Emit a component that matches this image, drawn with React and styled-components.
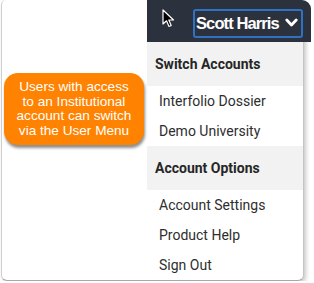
import React from "react";
import styled, { createGlobalStyle } from "styled-components";

const Global = createGlobalStyle`
  html, body {
    margin: 0;
    padding: 0;
    background: #ffffff;
  }
`;

const Frame = styled.div`
  box-sizing: border-box;
  margin-left: 1px;
  width: 303px;
  height: 281px;
  display: flex;
  background: #fff;
  border-left: 1px solid #cfcfcf;
  border-right: 1px solid #c4c4c4;
  border-bottom: 1px solid #a8a8a8;
  border-radius: 5px 8px 6px 6px;
  box-shadow: 2px 2px 4px rgba(0, 0, 0, 0.22);
`;

const Side = styled.div`
  box-sizing: border-box;
  width: 145px;
  flex: none;
  padding: 73px 0 0 2px;
`;

const Callout = styled.div`
  box-sizing: border-box;
  width: 140px;
  height: 72px;
  border-radius: 14px;
  background: #ff8200;
  box-shadow: 1px 3px 3px rgba(0, 0, 0, 0.45);
  display: flex;
  align-items: center;
  justify-content: center;
  text-align: center;
  color: #fff;
  font-family: "Liberation Sans", Arial, sans-serif;
  font-size: 13.6px;
  line-height: 14.5px;
`;

const Panel = styled.div`
  width: 156px;
  flex: none;
  display: flex;
  flex-direction: column;
`;

const Header = styled.div`
  box-sizing: border-box;
  width: 164px;
  height: 42px;
  background: #2c323d;
  border-top-right-radius: 9px;
  display: flex;
  align-items: center;
  padding-left: 15px;
`;

const Cursor = styled.svg`
  align-self: flex-start;
  margin-top: 9px;
  flex: none;
`;

const UserButton = styled.div`
  box-sizing: border-box;
  margin-left: 18px;
  width: 110px;
  height: 29px;
  margin-top: 4px;
  border: 2px solid #2f72c4;
  border-radius: 3px;
  display: flex;
  align-items: center;
  justify-content: space-between;
  padding: 0 3px 0 1px;
  color: #fff;
  font-family: "Liberation Sans", Arial, sans-serif;
  font-weight: 700;
  font-size: 16.5px;
  letter-spacing: -0.9px;
`;

const Menu = styled.div`
  display: flex;
  flex-direction: column;
  font-family: Roboto, "Liberation Sans", sans-serif;
  color: #2b2b2b;
`;

const SectionTitle = styled.div`
  height: 44px;
  display: flex;
  align-items: center;
  padding-left: 8px;
  background: #f2f2f2;
  font-size: 14px;
  font-weight: 700;
  color: #262626;
`;

const Item = styled.div`
  height: 30px;
  display: flex;
  align-items: center;
  padding-left: 12px;
  font-size: 14px;
  color: #2e2e2e;
`;

const Pointer = () => (
  <Cursor width="13" height="19" viewBox="0 0 13 19">
    <path
      d="M1 1 L1 15 L4.5 11.8 L7 17.5 L9.2 16.5 L6.8 11 L11.5 11 Z"
      fill="#000"
      stroke="#fff"
      strokeWidth="1.2"
      strokeLinejoin="round"
    />
  </Cursor>
);

const Chevron = () => (
  <svg width="13" height="10" viewBox="0 0 13 10">
    <path
      d="M1.8 2 L6.5 7 L11.2 2"
      fill="none"
      stroke="#fff"
      strokeWidth="2.8"
      strokeLinecap="round"
      strokeLinejoin="round"
    />
  </svg>
);

export default function App() {
  return (
    <>
      <Global />
      <Frame>
        <Side>
          <Callout>
            <div>
              Users with access
              <br />
              to an Institutional
              <br />
              account can switch
              <br />
              via the User Menu
            </div>
          </Callout>
        </Side>
        <Panel>
          <Header>
            <Pointer />
            <UserButton>
              <span>Scott Harris</span>
              <Chevron />
            </UserButton>
          </Header>
          <Menu>
            <SectionTitle>Switch Accounts</SectionTitle>
            <Item>Interfolio Dossier</Item>
            <Item>Demo University</Item>
            <SectionTitle>Account Options</SectionTitle>
            <Item>Account Settings</Item>
            <Item>Product Help</Item>
            <Item>Sign Out</Item>
          </Menu>
        </Panel>
      </Frame>
    </>
  );
}
